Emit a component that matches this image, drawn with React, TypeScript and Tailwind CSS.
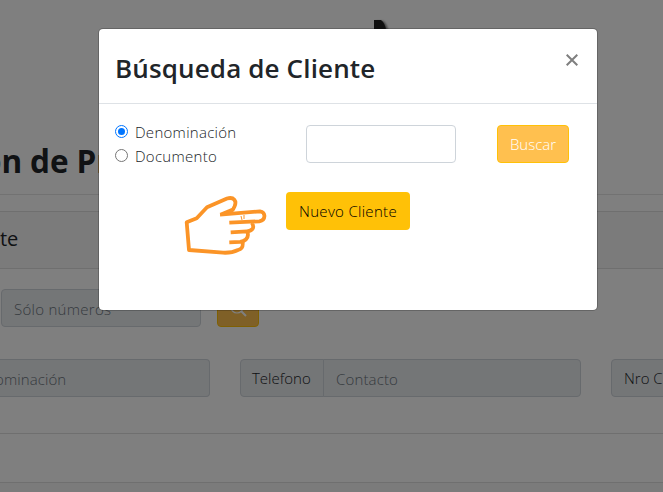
import React from "react";

const field = "h-[38px] shrink-0 border border-[#ced4da] bg-[#e9ecef] flex items-center px-3 text-[15px] font-light";

function Hand() {
  return (
    <svg width="84" height="64" viewBox="0 0 84 64" fill="none" stroke="#fb9427" strokeWidth="3.8" strokeLinejoin="round">
      <path d="M36 22.7L76 19.3C82 20 82 28 75.3 29.3L45.3 30.7M68 31C71 36 68 39 63 39.3L46.7 40.3M63.7 41C65 47 60 49.5 56 49.8L45.3 50.3M58.7 51C59 55 58 57 54 58C49 60.5 45 61 39 60.7L5 58L2.7 30.3L12.7 26.3L23 15.3L43 6.5C50 4.5 53 9 50.5 14.5L49 17.5L37 22.5" />
      <path d="M57 24l1 4m2-5v4" strokeWidth="1" />
    </svg>
  );
}

export default function App() {
  return (
    <div className="relative h-[492px] w-[663px] overflow-hidden bg-white font-['Open_Sans','Noto_Sans',sans-serif] text-[#212529]">
      <div className="flex h-full flex-col">
        <header className="flex h-[140px] shrink-0 pl-[374px] pt-[20px]">
          <svg width="24" height="20" viewBox="0 0 24 20" className="drop-shadow-[2px_1px_1px_#777]">
            <path d="M0 0H7Q11 3 12 10V20H0Z" fill="#222" />
          </svg>
        </header>
        <div className="-ml-[18px] h-[54px] shrink-0 whitespace-nowrap text-[31.5px] font-bold leading-[42px] tracking-[-0.1px]">ón de Pr</div>
        <div className="h-[17px] shrink-0 border-t border-[#e5e5e5]" />
        <section className="h-[223px] shrink-0 border-y border-[#dfdfdf]">
          <div className="flex h-[57px] items-center border-b border-[#dfdfdf] bg-[#f7f7f7] pb-[2px] text-[20px] tracking-[-0.2px]">te</div>
          <div className="flex pl-px pt-[20px]">
            <div className={`${field} w-[200px] rounded pt-[3px] tracking-[0.28px] text-[#6c757d]`}>Sólo números</div>
            <div className="ml-4 flex h-[38px] w-[42px] items-center justify-center rounded border border-[#ffc107] bg-[#ffc04f]">
              <svg width="17" height="17" viewBox="0 0 17 17" fill="none" stroke="white"><circle cx="7" cy="7" r="6" strokeWidth="1.2" /><path d="M11 11l5 5" strokeWidth="2" /></svg>
            </div>
          </div>
          <div className="flex pt-8">
            <div className={`${field} w-[210px] rounded-r border-l-0 !pl-0 pt-[3px] tracking-[0.1px] text-[#6c757d]`}><span className="-ml-[5px]">ominación</span></div>
            <div className={`${field} ml-[30px] w-[84px] rounded-l !px-[11px]`}>Telefono</div>
            <div className={`${field} -ml-px w-[258px] rounded-r pt-[3px] tracking-[0.15px] text-[#6c757d]`}>Contacto</div>
            <div className={`${field} ml-[30px] w-[110px] whitespace-nowrap rounded-l !px-[12px]`}>Nro Cliente</div>
          </div>
        </section>
        <div className="h-[48px] shrink-0" />
        <footer className="h-[10px] shrink-0 border-t border-[#dfdfdf] bg-[#f7f7f7]" />
      </div>
      <div className="absolute inset-0 bg-black/50" />
      <div className="absolute left-[98px] top-[28px] flex h-[283px] w-[500px] flex-col rounded-[5px] border border-black/20 bg-white bg-clip-padding">
        <div className="flex h-[75px] shrink-0 justify-between border-b border-[#dee2e6] pl-4 pr-[19px]">
          <h2 className="whitespace-nowrap pt-[19px] text-[26px] font-semibold leading-[40px] tracking-[0.14px]">Búsqueda de Cliente</h2>
          <svg className="mt-[25px]" width="12" height="12" viewBox="0 0 12 12" stroke="#7f7f7f" strokeWidth="2"><path d="M.7 .7l10.6 10.6M11.3 .7L.7 11.3" /></svg>
        </div>
        <div className="flex pl-4 pt-[17px]">
          <div className="flex w-[191px] flex-col text-[15px] font-light leading-6 tracking-[0.28px]">
            <label className="flex h-6"><span className="mr-[7px] mt-[4px] flex h-[13px] w-[13px] items-center justify-center rounded-full border border-[#0075ff]"><span className="h-[7px] w-[7px] rounded-full bg-[#0075ff]" /></span><span className="-mt-px">Denominación</span></label>
            <label className="flex h-6"><span className="mr-[7px] mt-[4px] h-[13px] w-[13px] rounded-full border border-[#767676]" /><span className="-mt-px">Documento</span></label>
          </div>
          <div className="mt-1 h-[38px] w-[150px] rounded border border-[#ced4da]" />
          <button className="ml-[41px] mt-1 h-[38px] w-[72px] rounded border border-[#ffc107] bg-[#ffc04f] text-[15px] font-light text-white">Buscar</button>
        </div>
        <div className="flex pl-[85px] pt-[23px]">
          <Hand />
          <button className="ml-[18px] h-[38px] w-[124px] rounded bg-[#ffc107] text-[15px] font-light tracking-[0.3px] text-black">Nuevo Cliente</button>
        </div>
      </div>
    </div>
  );
}
